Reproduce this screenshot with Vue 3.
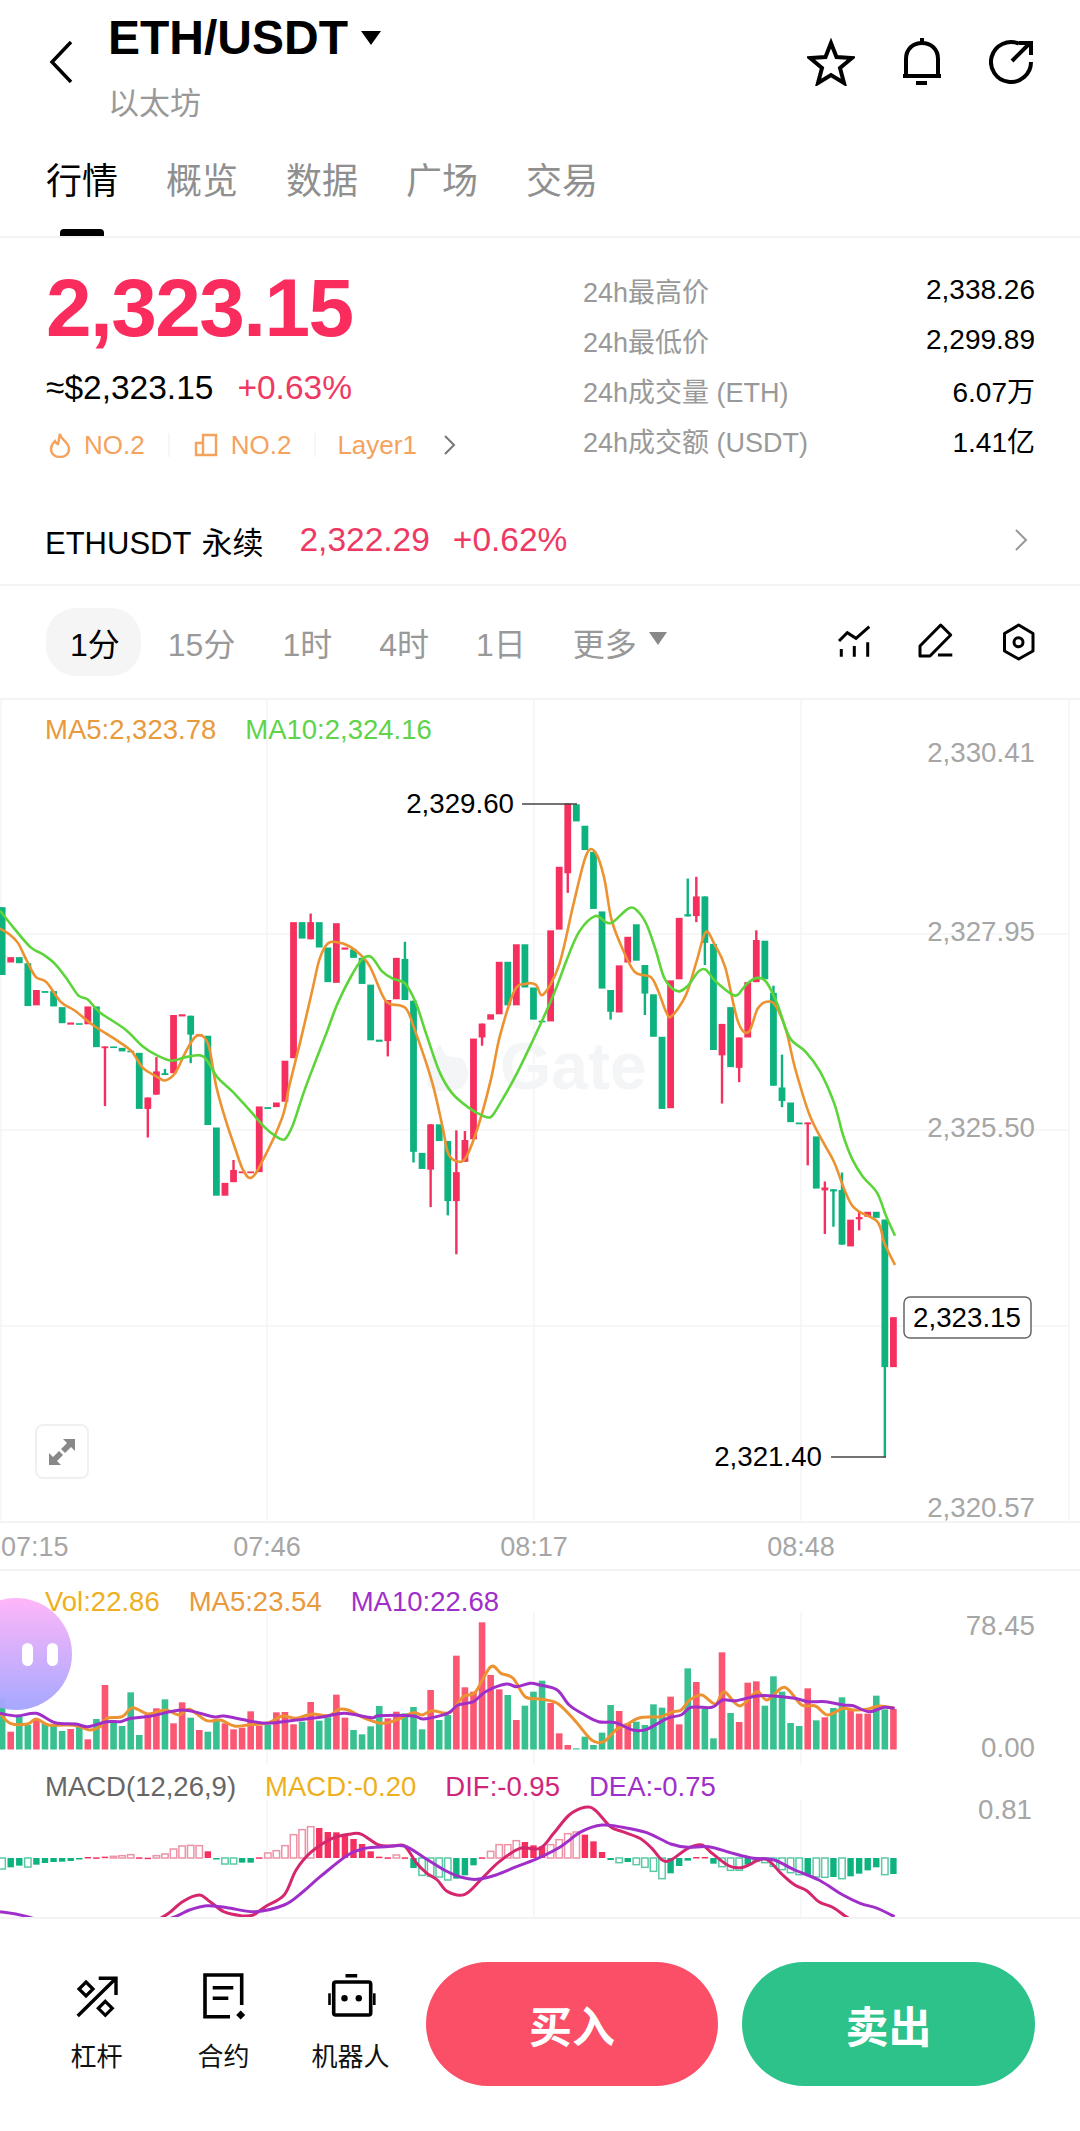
<template>
  <div class="page">
    <header class="topbar">
      <svg class="back" width="24" height="42" viewBox="0 0 24 42"><path d="M22 1 L3 21 L22 41" fill="none" stroke="#000" stroke-width="3.5" /></svg>
      <div class="title-col">
        <div class="title">ETH/USDT<i class="caret"></i></div>
        <div class="subtitle">以太坊</div>
      </div>
      <div class="actions">
        <svg width="48" height="48" viewBox="0 0 48 48"><path d="M24 5 L29.5 19 L45 20 L33 30 L37 45 L24 37 L11 45 L15 30 L3 20 L18.5 19 Z" fill="none" stroke="#000" stroke-width="4" /></svg>
        <svg width="48" height="48" viewBox="0 0 48 48"><path d="M24 0 V6 M8 38 V21 C8 11 15 5 24 5 C33 5 40 11 40 21 V38 M5 38 H43" fill="none" stroke="#000" stroke-width="4" /><rect x="18" y="43" width="11" height="4" /></svg>
        <svg width="48" height="48" viewBox="0 0 48 48"><path d="M30 5.7 A20 20 0 1 0 42 24 M23 23 L41 5 M30 5 H42 V17" fill="none" stroke="#000" stroke-width="4" /></svg>
      </div>
    </header>

    <nav class="tabs">
      <div v-for="(t, i) in tabs" :key="t" class="tab" :class="{ active: i === 0 }">{{ t }}</div>
    </nav>

    <section class="quote">
      <div class="quote-left">
        <div class="big-price">2,323.15</div>
        <div class="sub-price"><span>≈$2,323.15</span><span class="up">+0.63%</span></div>
        <div class="tags">
          <svg width="22" height="26" viewBox="0 0 22 26"><path d="M11 2 C12 8 20 10 20 17 C20 22 16 25 11 25 C6 25 2 22 2 17 C2 13 4 11 6 9 C7 11 8 12 9 12 C10 9 10 5 11 2 Z" fill="none" stroke="#f5a25d" stroke-width="2.4" /></svg>
          <span class="tag-text">NO.2</span>
          <i class="tag-sep"></i>
          <svg width="24" height="24" viewBox="0 0 24 24"><path d="M9 22 V2 H22 V22 Z M9 10 H2 V22 H9" fill="none" stroke="#f5a25d" stroke-width="2.4" /></svg>
          <span class="tag-text">NO.2</span>
          <i class="tag-sep"></i>
          <span class="tag-text">Layer1</span>
          <svg class="tag-more" width="13" height="22" viewBox="0 0 13 22"><path d="M2 2 L11 11 L2 20" fill="none" stroke="#777" stroke-width="2" /></svg>
        </div>
      </div>
      <div class="quote-right">
        <div v-for="s in stats" :key="s.label" class="stat">
          <span class="stat-label">{{ s.label }}</span>
          <span class="stat-value">{{ s.value }}</span>
        </div>
      </div>
    </section>

    <div class="perp">
      <span class="perp-name">ETHUSDT 永续</span>
      <span class="perp-num">2,322.29</span>
      <span class="perp-num">+0.62%</span>
      <svg class="perp-more" width="14" height="24" viewBox="0 0 14 24"><path d="M2 2 L12 12 L2 22" fill="none" stroke="#999" stroke-width="2" /></svg>
    </div>

    <div class="frames">
      <div v-for="(f, i) in frames" :key="f" class="frame" :class="{ active: i === 0 }">{{ f }}</div>
      <div class="frame">更多<i class="frame-caret"></i></div>
      <div class="frame-tools">
        <svg width="40" height="40" viewBox="0 0 40 40"><path d="M3 19 L11.3 10.7 L20 16.3 L33.3 4.7 M5.3 27 V34.7 M18.3 24 V34.7 M31.7 20.3 V34.7" fill="none" stroke="#000" stroke-width="3" /></svg>
        <svg width="40" height="40" viewBox="0 0 40 40"><path d="M3 24 L23.7 3 L33.7 13 L13 34 H3 Z M21 33 H35.3" fill="none" stroke="#000" stroke-width="3" stroke-linejoin="round" /></svg>
        <svg width="40" height="40" viewBox="0 0 40 40"><path d="M20.7 3 L35 11.5 V29 L20.7 37 L6.5 29 V11.5 Z" fill="none" stroke="#000" stroke-width="3" stroke-linejoin="round" /><circle cx="20.5" cy="20.3" r="4.5" fill="none" stroke="#000" stroke-width="3" /></svg>
      </div>
    </div>

    <section class="main-chart">
      <div class="legend main-legend">
        <span class="c-ma5">MA5:2,323.78</span>
        <span class="c-ma10">MA10:2,324.16</span>
      </div>
      <svg class="main-svg" width="1080" height="821" viewBox="0 700 1080 821">
        <g class="grid">
          <path v-for="y in [934, 1130, 1326]" :key="y" :d="`M0 ${y} H1069`" />
          <path v-for="x in [1, 267, 534, 801, 1069]" :key="x" :d="`M${x} 700 V1521`" />
        </g>
        <text x="500" y="1089" class="watermark">Gate</text>
        <path class="watermark-logo" d="M428 1060 L440 1044 L446 1056 L462 1058 Q474 1074 462 1088 Q440 1096 428 1086 Z" />
        <g v-for="(c, i) in candles" :key="i" :class="c.red ? 'red' : 'green'">
          <rect v-if="c.wick" :x="c.x - 1.2" :y="c.wick[0]" width="2.4" :height="c.wick[1] - c.wick[0]" />
          <rect :x="c.x - 3.4" :y="c.top" width="6.8" :height="c.h" />
        </g>
        <path class="line l-ma5" :d="mainMa5" />
        <path class="line l-ma10" :d="mainMa10" />
        <text x="1035" y="762" class="axis" text-anchor="end">2,330.41</text>
        <text x="1035" y="941" class="axis" text-anchor="end">2,327.95</text>
        <text x="1035" y="1137" class="axis" text-anchor="end">2,325.50</text>
        <text x="1035" y="1517" class="axis" text-anchor="end">2,320.57</text>
        <text x="514" y="813" class="mark" text-anchor="end">2,329.60</text>
        <path d="M522 804 H577" class="mark-line" />
        <text x="822" y="1466" class="mark" text-anchor="end">2,321.40</text>
        <path d="M831 1457 H886" class="mark-line" />
        <rect x="904" y="1297" width="127" height="41" rx="6" class="price-box" />
        <text x="967" y="1327" class="mark" text-anchor="middle">2,323.15</text>
      </svg>
      <div class="expand">
        <svg width="28" height="28" viewBox="0 0 28 28"><path d="M27 1 V13 L23 9 L17 15 L13 11 L19 5 L15 1 Z M1 27 V15 L5 19 L11 13 L15 17 L9 23 L13 27 Z" fill="#888" /></svg>
      </div>
    </section>

    <svg class="time-axis" width="1080" height="50" viewBox="0 1521 1080 50">
      <path d="M0 1522 H1080 M0 1570 H1080" stroke="#f3f3f3" stroke-width="2" />
      <text x="1" y="1556" class="axis small">07:15</text>
      <text x="267" y="1556" class="axis small" text-anchor="middle">07:46</text>
      <text x="534" y="1556" class="axis small" text-anchor="middle">08:17</text>
      <text x="801" y="1556" class="axis small" text-anchor="middle">08:48</text>
    </svg>

    <section class="vol-chart">
      <div class="legend vol-legend">
        <span class="c-vol">Vol:22.86</span>
        <span class="c-ma5">MA5:23.54</span>
        <span class="c-purple">MA10:22.68</span>
      </div>
      <svg width="1080" height="199" viewBox="0 1571 1080 199">
        <g class="grid">
          <path v-for="x in [267, 534, 801]" :key="x" :d="`M${x} 1612 V1765`" />
        </g>
        <rect v-for="(b, i) in volBars" :key="i" :x="b.x - 3.3" :y="b.y" width="6.6" :height="1749.5 - b.y" :class="b.red ? 'vol-red' : 'vol-green'" />
        <path class="line l-vol5" :d="volMa5" />
        <path class="line l-vol10" :d="volMa10" />
        <text x="1035" y="1635" class="axis" text-anchor="end">78.45</text>
        <text x="1035" y="1757" class="axis" text-anchor="end">0.00</text>
      </svg>
      <div class="blob"><i></i><i></i></div>
    </section>

    <section class="macd-chart">
      <div class="legend macd-legend">
        <span class="c-gray">MACD(12,26,9)</span>
        <span class="c-vol">MACD:-0.20</span>
        <span class="c-dif">DIF:-0.95</span>
        <span class="c-purple">DEA:-0.75</span>
      </div>
      <svg width="1080" height="147" viewBox="0 1770 1080 147">
        <g class="grid">
          <path v-for="x in [267, 534, 801]" :key="x" :d="`M${x} 1800 V1917`" />
        </g>
        <rect v-for="(b, i) in macdBars" :key="i" :x="b.x - 3.2" :y="b.y" width="6.4" :height="b.h" :class="b.cls" />
        <path class="line l-dif" :d="macdDif" />
        <path class="line l-dea" :d="macdDea" />
        <text x="1032" y="1819" class="axis" text-anchor="end">0.81</text>
      </svg>
    </section>

    <footer class="bottom">
      <div class="tool">
        <svg width="48" height="48" viewBox="0 0 48 48">
          <path d="M4.7 43 L43 5.3 M25.7 5.3 H43 V22" fill="none" stroke="#000" stroke-width="3.4" />
          <path d="M13 9 L20 16 L13 23 L6 16 Z M32.3 28.3 L39.3 35.3 L32.3 42.3 L25.3 35.3 Z" fill="none" stroke="#000" stroke-width="3.2" />
        </svg>
        <span>杠杆</span>
      </div>
      <div class="tool">
        <svg width="48" height="48" viewBox="0 0 48 48">
          <path d="M41.7 32 V2 H5 V43.7 H30 M12.7 14.7 H33.3 M12.7 25.3 H28.3" fill="none" stroke="#000" stroke-width="3.6" />
          <path d="M40.7 37.5 L45.2 42 L40.7 46.5 L36.2 42 Z" />
        </svg>
        <span>合约</span>
      </div>
      <div class="tool">
        <svg width="52" height="48" viewBox="0 0 52 48">
          <rect x="20.5" y="1" width="11.7" height="3.5" />
          <rect x="8.7" y="9" width="37" height="33" rx="2" fill="none" stroke="#000" stroke-width="3.6" />
          <rect x="3.2" y="20.3" width="2.6" height="11.7" /><rect x="48" y="20.3" width="2.6" height="11.7" />
          <circle cx="19.5" cy="25.3" r="3.2" /><circle cx="33.8" cy="25.3" r="3.2" />
        </svg>
        <span>机器人</span>
      </div>
      <div class="trade buy">买入</div>
      <div class="trade sell">卖出</div>
    </footer>
  </div>
</template>

<script setup>
const tabs = ['行情', '概览', '数据', '广场', '交易']
const frames = ['1分', '15分', '1时', '4时', '1日']
const stats = [
  { label: '24h最高价', value: '2,338.26' },
  { label: '24h最低价', value: '2,299.89' },
  { label: '24h成交量 (ETH)', value: '6.07万' },
  { label: '24h成交额 (USDT)', value: '1.41亿' }
]

// candle x position, same step for all three panels
const cx = i => 2.14 + 8.57 * i

// [red, top, bottom, wickTop, wickBottom] measured on a 2.8x crop starting at y=700
const rawCandles = [
  [0,580,770],[1,720,735],[0,720,737],[0,737,857],[1,812,855],[0,815,820],[0,815,858],[0,860,905],[1,903,909],[0,905,909],
  [1,858,908],[0,858,972],[1,970,975,970,1137],[0,970,974],[0,974,984],[0,982,986],[0,988,1145],[1,1113,1145,1113,1225],[1,1040,1105,1000,1105],[0,1045,1050,1033,1050],
  [1,882,1045],[1,880,886],[0,884,937,884,1017],[1,936,942],[0,940,1190],[0,1197,1388],[1,1352,1388],[1,1316,1350,1288,1350],[1,1320,1325],[1,1320,1325],
  [1,1138,1322],[0,1140,1145],[1,1127,1140],[1,1010,1125],[1,622,1003],[0,622,668],[1,622,670,598,670],[0,622,693],[0,693,790],[1,625,792],
  [1,693,699],[0,698,722],[0,722,795],[0,797,953],[0,951,957],[1,840,955,840,998],[1,722,838],[0,725,840,677,840],[0,842,1265,842,1295],[0,1268,1313],
  [1,1188,1315,1188,1420],[0,1188,1235],[0,1235,1403,1235,1443],[1,1322,1403,1205,1552],[1,1232,1293,1207,1293],[1,948,1230],[1,906,945,906,968],[1,880,895],[1,733,880],[0,733,855],
  [1,684,855],[0,684,805],[0,805,895],[0,898,902],[1,645,900],[1,467,643],[1,290,485,290,540],[0,292,340],[0,352,420],[0,425,585],
  [0,592,808],[0,812,873,812,895],[1,743,875],[1,663,735],[0,628,730],[0,742,822,742,882],[0,824,943],[0,943,1145],[1,785,1143],[1,610,782],
  [0,600,606,500,606],[1,550,605,495,622],[0,550,680,550,742],[0,683,980],[1,907,995,907,1130],[0,860,1028],[1,945,1030,945,1070],[1,790,945],[1,672,790,645,790],[0,674,782],
  [0,820,1080,800,1080],[0,1085,1123,993,1140],[0,1127,1182],[0,1183,1188],[1,1183,1188,1183,1303],[0,1222,1368],[1,1365,1373,1348,1495],[0,1370,1376,1370,1475],[0,1372,1525,1323,1525],[1,1455,1530],
  [1,1448,1454,1432,1485],[1,1433,1447],[0,1433,1450],[0,1455,1868,1455,2120],[1,1728,1868]
]
const my = v => 700 + v / 2.8
const candles = rawCandles.map((c, i) => ({
  x: cx(i),
  red: c[0] === 1,
  top: my(c[1]),
  h: Math.max((c[2] - c[1]) / 2.8, 1.6),
  wick: c[3] !== undefined ? [my(c[3]), my(c[4])] : null
}))

// catmull-rom through the sampled points
function smooth(pts) {
  let d = `M${pts[0][0].toFixed(1)} ${pts[0][1].toFixed(1)}`
  for (let i = 0; i < pts.length - 1; i++) {
    const p0 = pts[i - 1] || pts[i]
    const p1 = pts[i]
    const p2 = pts[i + 1]
    const p3 = pts[i + 2] || p2
    const a = [p1[0] + (p2[0] - p0[0]) / 6, p1[1] + (p2[1] - p0[1]) / 6]
    const b = [p2[0] - (p3[0] - p1[0]) / 6, p2[1] - (p3[1] - p1[1]) / 6]
    d += ` C${a[0].toFixed(1)} ${a[1].toFixed(1)} ${b[0].toFixed(1)} ${b[1].toFixed(1)} ${p2[0].toFixed(1)} ${p2[1].toFixed(1)}`
  }
  return d
}

const rawMa5 = [[0,640],[25,655],[50,680],[75,730],[100,775],[130,790],[170,845],[210,870],[260,910],[330,955],[370,985],[400,1030],[440,1055],[462,1065],[490,1045],[520,985],[545,945],[565,940],[585,970],[605,1080],[630,1170],[660,1260],[680,1315],[702,1338],[730,1300],[790,1170],[810,1080],[840,960],[875,810],[895,725],[920,680],[960,682],[1000,705],[1035,745],[1070,825],[1090,850],[1135,862],[1160,920],[1210,1070],[1240,1200],[1255,1270],[1280,1292],[1305,1280],[1340,1190],[1375,1060],[1400,940],[1440,815],[1470,795],[1500,797],[1521,825],[1566,740],[1606,570],[1641,435],[1666,425],[1691,495],[1711,610],[1736,680],[1776,760],[1821,775],[1841,810],[1866,875],[1881,885],[1921,825],[1951,730],[1976,650],[2001,685],[2031,750],[2066,900],[2096,930],[2121,865],[2146,845],[2171,855],[2201,925],[2226,1030],[2266,1160],[2306,1240],[2336,1295],[2386,1415],[2456,1460],[2476,1520],[2506,1582]]
const rawMa10 = [[0,590],[40,640],[85,692],[120,712],[155,740],[190,785],[220,828],[245,838],[280,875],[350,922],[400,970],[440,995],[480,1010],[520,1000],[560,995],[580,1010],[610,1058],[650,1095],[700,1150],[740,1195],[770,1220],[797,1230],[820,1190],[850,1100],[880,1020],[915,930],[945,850],[985,770],[1015,725],[1040,720],[1070,760],[1100,780],[1135,795],[1165,850],[1195,940],[1230,1040],[1265,1100],[1310,1140],[1350,1163],[1375,1167],[1400,1130],[1450,1040],[1526,880],[1556,810],[1586,730],[1621,650],[1666,605],[1696,622],[1716,622],[1761,583],[1786,592],[1811,630],[1836,700],[1861,780],[1896,815],[1926,800],[1956,760],[1976,755],[2001,785],[2046,822],[2066,825],[2091,795],[2121,778],[2146,790],[2176,850],[2211,945],[2256,985],[2296,1040],[2336,1130],[2361,1220],[2386,1285],[2416,1335],[2456,1380],[2481,1445],[2506,1500]]
const mainMa5 = smooth(rawMa5.map(p => [p[0] / 2.8, my(p[1])]))
const mainMa10 = smooth(rawMa10.map(p => [p[0] / 2.8, my(p[1])]))

// volume: [red, top] on a 3x crop starting at y=1570
const rawVol = [
  [0,385],[1,485],[0,440],[0,465],[1,450],[0,460],[0,465],[0,483],[1,477],[0,470],[1,508],[0,447],[1,345],[0,455],[0,468],[0,367],[0,495],[1,430],[1,415],[0,388],
  [1,460],[1,397],[0,443],[1,480],[0,485],[0,452],[1,460],[1,478],[1,473],[1,424],[1,467],[0,465],[1,427],[1,426],[1,463],[0,455],[1,396],[0,452],[0,442],[1,374],
  [1,443],[0,480],[0,493],[0,469],[0,408],[1,445],[1,425],[0,430],[0,411],[0,478],[1,360],[0,450],[0,435],[1,257],[1,352],[1,365],[1,157],[1,315],[1,358],[0,375],
  [1,450],[0,407],[0,365],[0,332],[1,399],[1,490],[1,525],[0,535],[0,500],[0,525],[0,488],[0,405],[1,423],[1,460],[0,455],[0,465],[0,403],[0,413],[1,380],[1,463],
  [0,295],[1,336],[0,416],[0,505],[1,247],[0,429],[1,456],[1,338],[1,334],[0,407],[0,319],[0,365],[0,459],[0,468],[1,355],[0,451],[1,442],[0,414],[0,382],[1,420],
  [1,431],[1,431],[0,377],[0,418],[1,417]
]
const volBars = rawVol.map((b, i) => ({ x: cx(i), red: b[0] === 1, y: 1570 + b[1] / 3 }))

const toVol = p => [p[0] / 2.904, 1570 + p[1] / 3]
const rawVol5 = [[0,430],[30,460],[80,462],[105,447],[140,465],[190,465],[225,468],[260,480],[290,470],[310,445],[355,440],[385,413],[430,432],[480,420],[520,435],[550,418],[600,452],[640,450],[680,468],[720,465],[780,458],[820,438],[860,445],[905,432],[955,437],[985,418],[1010,420],[1060,445],[1110,460],[1150,450],[1200,428],[1225,435],[1255,422],[1305,428],[1345,380],[1380,367],[1425,290],[1455,310],[1490,325],[1525,380],[1568,387],[1618,400],[1668,450],[1718,510],[1753,515],[1788,480],[1818,465],[1858,443],[1918,440],[1953,425],[1978,420],[2003,390],[2038,375],[2078,402],[2103,365],[2148,408],[2198,365],[2228,390],[2278,352],[2328,405],[2368,408],[2403,435],[2448,415],[2478,420],[2518,418],[2553,408],[2598,415]]
const rawVol10 = [[0,430],[50,438],[105,430],[160,458],[220,462],[255,470],[310,455],[350,455],[380,445],[440,438],[530,420],[620,440],[650,438],[720,452],[780,460],[860,450],[940,440],[1000,430],[1080,443],[1100,437],[1200,438],[1230,447],[1300,430],[1330,405],[1375,395],[1410,365],[1470,342],[1500,350],[1540,340],[1568,345],[1618,360],[1653,405],[1698,435],[1738,455],[1788,458],[1838,480],[1878,478],[1938,445],[1978,435],[2008,412],[2068,412],[2098,390],[2138,392],[2198,378],[2248,378],[2308,385],[2348,395],[2398,395],[2448,405],[2478,407],[2523,425],[2568,412],[2598,415]]
const volMa5 = smooth(rawVol5.map(toVol))
const volMa10 = smooth(rawVol10.map(toVol))

// macd histogram: signed height on the 3x crop, second value = hollow
const rawMacd = [
  [-33,1],[-28],[-23],[-27,1],[-20],[-15],[-12],[-11],[-9],[-4],[3],[2],[4],[5,1],[7,1],[10,1],[2],[1],[7,1],[12,1],
  [27,1],[36,1],[38,1],[37,1],[20],[-3],[-18,1],[-18,1],[-14],[-14],[2],[15,1],[22,1],[37,1],[70,1],[85,1],[94,1],[90],[78],[77],
  [70],[57],[42],[20],[4],[2],[9,1],[2],[-30],[-52,1],[-55,1],[-57,1],[-66,1],[-62],[-52],[-22],[2],[20,1],[40,1],[40,1],
  [52,1],[48],[38],[35],[40,1],[55,1],[73,1],[78,1],[70],[50],[18],[-6],[-14,1],[-12],[-20,1],[-28,1],[-40,1],[-62,1],[-46],[-24],
  [-8],[3],[3],[-17],[-26,1],[-37,1],[-37,1],[-20],[-10,1],[-14,1],[-25,1],[-35,1],[-44,1],[-50,1],[-50],[-57,1],[-58,1],[-57],[-62,1],[-55],
  [-47],[-37],[-28],[-50,1],[-48]
]
const macdZero = 1858
const macdBars = rawMacd.map((b, i) => {
  const h = Math.abs(b[0]) / 3
  const color = b[0] > 0 ? 'red' : 'green'
  return {
    x: cx(i),
    y: b[0] > 0 ? macdZero - h : macdZero,
    h: Math.max(h, 1.5),
    cls: b[1] ? `hollow-${color}` : color
  }
})

const toMacd = p => [p[0] / 2.904, 1770 + p[1] / 3]
const rawDif = [[440,460],[490,430],[530,395],[578,375],[610,395],[650,425],[700,437],[735,435],[770,410],[825,375],[860,300],[905,245],[965,205],[1020,192],[1050,193],[1100,225],[1140,228],[1175,228],[1210,280],[1240,310],[1270,330],[1300,365],[1350,373],[1400,325],[1450,275],[1510,235],[1568,235],[1608,190],[1653,135],[1698,112],[1728,120],[1773,170],[1808,185],[1858,205],[1893,235],[1923,270],[1948,270],[1998,235],[2038,225],[2068,250],[2118,288],[2158,292],[2208,268],[2233,272],[2268,310],[2308,345],[2343,362],[2378,395],[2418,412],[2453,437],[2488,460]]
const rawDea = [[0,425],[80,440],[280,500],[480,450],[550,420],[600,407],[660,413],[740,425],[825,405],[880,365],[930,320],[1010,255],[1060,235],[1120,230],[1175,228],[1230,262],[1290,300],[1340,322],[1385,328],[1440,315],[1500,290],[1568,262],[1628,230],[1688,185],[1748,165],[1808,172],[1878,188],[1948,222],[1998,232],[2058,230],[2128,250],[2188,265],[2248,270],[2308,300],[2378,330],[2448,375],[2498,400],[2548,415],[2598,440]]
const macdDif = smooth(rawDif.map(toMacd))
const macdDea = smooth(rawDea.map(toMacd))
</script>

<style scoped>
.page {
  width: 1080px;
  height: 2131px;
  overflow: hidden;
  background: #fff;
  color: #000;
  font-family: "Liberation Sans", "Noto Sans CJK SC", sans-serif;
}
svg {
  display: block;
}
text {
  font-family: "Liberation Sans", sans-serif;
}

.topbar {
  height: 134px;
  display: flex;
  padding: 0 43px 0 49px;
}
.back {
  margin: 41px 35px 0 0;
}
.title-col {
  padding-top: 14px;
}
.title {
  font-size: 48px;
  line-height: 48px;
  font-weight: 700;
  display: flex;
}
.caret {
  width: 0;
  height: 0;
  margin: 17px 0 0 13px;
  border-left: 10px solid transparent;
  border-right: 10px solid transparent;
  border-top: 14px solid #000;
}
.subtitle {
  margin-top: 25px;
  font-size: 31px;
  line-height: 34px;
  color: #999;
}
.actions {
  margin: 38px 0 0 auto;
  display: flex;
  gap: 43px;
}

.tabs {
  height: 104px;
  box-sizing: border-box;
  display: flex;
  gap: 48px;
  padding-left: 46px;
  border-bottom: 2px solid #f3f3f3;
}
.tab {
  position: relative;
  padding-top: 26px;
  font-size: 36px;
  line-height: 44px;
  color: #8f8f8f;
}
.tab.active {
  color: #000;
}
.tab.active::after {
  content: "";
  position: absolute;
  left: 14px;
  bottom: 0;
  width: 44px;
  height: 7px;
  background: #000;
  border-radius: 4px 4px 0 0;
}

.quote {
  height: 258px;
  box-sizing: border-box;
  display: flex;
  justify-content: space-between;
  padding: 30px 45px 0 46px;
}
.big-price {
  font-size: 82px;
  line-height: 80px;
  font-weight: 700;
  letter-spacing: -1.6px;
  color: #fa2c5e;
}
.sub-price {
  margin-top: 20px;
  display: flex;
  gap: 24px;
  font-size: 33.5px;
  line-height: 40px;
}
.up {
  color: #ee3a63;
}
.tags {
  margin-top: 20px;
  height: 34px;
  display: flex;
  align-items: center;
  color: #f5a25d;
  font-size: 26px;
}
.tags svg {
  margin-left: 3px;
  margin-right: 13px;
}
.tag-sep {
  width: 2px;
  height: 24px;
  margin: 0 21px 0 23px;
  background: #f6f6f6;
}
.tags .tag-more {
  margin: 0 0 0 26px;
}
.quote-right {
  width: 452px;
  margin-top: -3px;
}
.stat {
  height: 50px;
  display: flex;
  justify-content: space-between;
  align-items: center;
  font-size: 28px;
}
.stat-label {
  color: #999;
  font-size: 27px;
}

.perp {
  height: 90px;
  box-sizing: border-box;
  display: flex;
  align-items: center;
  padding: 0 52px 0 45px;
  border-bottom: 2px solid #f3f3f3;
}
.perp-name {
  font-size: 31px;
  word-spacing: 2px;
  margin-right: 36px;
}
.perp-num {
  font-size: 33.5px;
  color: #ee3a63;
  margin-right: 23px;
}
.perp-more {
  margin-left: auto;
}

.frames {
  height: 114px;
  box-sizing: border-box;
  display: flex;
  align-items: center;
  padding: 0 42px 0 46px;
  border-bottom: 2px solid #f3f3f3;
}
.frame {
  height: 68px;
  display: flex;
  align-items: center;
  padding: 0 23.5px;
  font-size: 32px;
  color: #999;
}
.frame.active {
  padding: 0 21px 0 24px;
  margin-right: 3.5px;
  color: #000;
  background: #f5f5f5;
  border-radius: 30px;
}
.frame-caret {
  width: 0;
  height: 0;
  margin: -8px 0 0 12px;
  border-left: 9px solid transparent;
  border-right: 9px solid transparent;
  border-top: 13px solid #888;
}
.frame-tools {
  margin-left: auto;
  display: flex;
  gap: 41px;
}

.main-chart,
.vol-chart,
.macd-chart {
  position: relative;
}
.main-chart {
  height: 821px;
}
.main-svg {
  overflow: visible;
  position: relative;
  z-index: 1;
}
.legend {
  position: absolute;
  left: 45px;
  display: flex;
  gap: 29px;
  font-size: 27.5px;
  line-height: 32px;
  z-index: 2;
}
.main-legend {
  top: 14px;
}
.vol-legend {
  top: 15px;
}
.macd-legend {
  top: 1px;
}
.c-ma5 { color: #e89a3c; }
.c-ma10 { color: #5fd34a; }
.c-vol { color: #eeb020; }
.c-purple { color: #a02fc9; }
.c-gray { color: #666; }
.c-dif { color: #d0267a; }

.grid path {
  stroke: #f4f4f4;
  stroke-width: 1.5;
  fill: none;
}
.watermark {
  font-size: 66px;
  font-weight: 700;
  fill: #f4f5f6;
}
.watermark-logo {
  fill: #f4f5f6;
}
.red rect,
rect.red {
  fill: #f5305f;
}
.green rect,
rect.green {
  fill: #0eb27f;
}
.hollow-red {
  fill: #fff;
  fill-opacity: 0;
  stroke: #ec93a6;
  stroke-width: 1.5;
}
.hollow-green {
  fill: #fff;
  fill-opacity: 0;
  stroke: #5cc9a5;
  stroke-width: 1.5;
}
.line {
  fill: none;
  stroke-width: 2.6;
  stroke-linejoin: round;
}
.l-ma5 { stroke: #ec9230; }
.l-ma10 { stroke: #5cd43a; }
.l-vol5 { stroke: #ec9230; stroke-width: 3; }
.l-vol10 { stroke: #a02fc9; stroke-width: 3; }
.l-dif { stroke: #d5266e; stroke-width: 3; }
.l-dea { stroke: #a02fc9; stroke-width: 3; }
.axis {
  font-size: 27.7px;
  fill: #a6a6a6;
}
.axis.small {
  font-size: 27px;
}
.mark {
  font-size: 27.7px;
  fill: #000;
}
.mark-line {
  stroke: #444;
  stroke-width: 1.5;
}
.price-box {
  fill: #fff;
  stroke: #666;
  stroke-width: 1.5;
}
.expand {
  position: absolute;
  left: 35px;
  top: 724px;
  width: 54px;
  height: 55px;
  box-sizing: border-box;
  border: 2px solid #f0f0f0;
  border-radius: 8px;
  background: #fff;
  display: flex;
  align-items: center;
  justify-content: center;
  z-index: 2;
}

.vol-chart {
  height: 199px;
}
.blob {
  position: absolute;
  left: -40px;
  top: 27px;
  width: 112px;
  height: 112px;
  border-radius: 50%;
  background: linear-gradient(#ffb4f8, #a3a5ff);
  opacity: 0.96;
  display: flex;
  align-items: center;
  justify-content: center;
  gap: 14px;
  padding-left: 48px;
  box-sizing: border-box;
}
.blob i {
  width: 11px;
  height: 23px;
  background: #fff;
  border-radius: 6px;
}
.vol-red { fill: #fb5672; }
.vol-green { fill: #38c090; }

.macd-chart {
  height: 147px;
  border-bottom: 2px solid #f3f3f3;
  overflow: hidden;
}

.bottom {
  display: flex;
  align-items: flex-start;
  padding: 43px 0 0 33px;
}
.tool {
  width: 127px;
  padding-top: 11px;
  display: flex;
  flex-direction: column;
  align-items: center;
  font-size: 26px;
  line-height: 34px;
  color: #111;
}
.tool span {
  margin-top: 19px;
}
.trade {
  width: 292px;
  height: 124px;
  border-radius: 62px;
  color: #fff;
  font-size: 43px;
  font-weight: 700;
  display: flex;
  align-items: center;
  justify-content: center;
}
.buy {
  margin-left: 12px;
  background: #fa4f67;
}
.sell {
  margin-left: 24px;
  width: 293px;
  background: #2dc28a;
}
</style>
